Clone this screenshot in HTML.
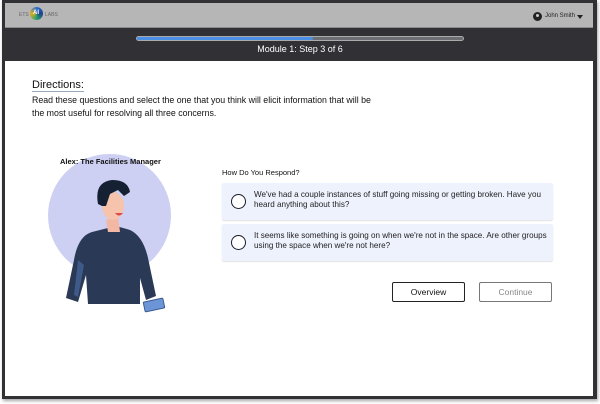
<!DOCTYPE html>
<html><head><style>
*{margin:0;padding:0;box-sizing:border-box}
body{width:600px;height:404px;background:#fff;position:relative;overflow:hidden;font-family:"Liberation Sans",sans-serif}
.frame{position:absolute;left:2px;top:0;width:595px;height:399px;background:#303035;box-shadow:1px 2px 3px rgba(0,0,0,.35)}
.top{position:absolute;left:5px;top:3px;width:588px;height:25px;background:#b6b6b6;border-bottom:1px solid #8a8a8a}
.content{position:absolute;left:5px;top:61px;width:588px;height:335px;background:#fff}
.abs{position:absolute}
.opt{position:absolute;left:222px;width:331px;background:#eef2fd;border-radius:2px;box-shadow:0 1px 1px rgba(0,0,0,.12);font-size:8.1px;line-height:10px;color:#222}
.radio{position:absolute;left:9px;width:15px;height:15px;border:1.5px solid #1a1a2a;border-radius:50%;background:#fff}
.btn{position:absolute;top:282px;width:73px;height:20px;border-radius:2px;font-size:8.5px;text-align:center;line-height:18px}
</style></head><body>
<div class="frame"></div>
<div class="top"></div>
<div class="abs" style="left:19px;top:12px;font-size:5px;color:#666">ETS</div>
<div class="abs" style="left:30px;top:7px;width:13px;height:13px;border-radius:50%;background:conic-gradient(#2a6fd1,#1b3f8f,#2aa06a,#e0b020,#2a6fd1)"></div>
<div class="abs" style="left:33px;top:10px;font-size:6px;color:#fff;font-weight:bold">AI</div>
<div class="abs" style="left:45px;top:12px;font-size:5px;color:#666">LABS</div>
<div class="abs" style="left:533px;top:12px;width:9px;height:9px;border-radius:50%;background:#222;border:1px solid #222"><div style="position:absolute;left:2px;top:1px;width:3px;height:3px;border-radius:50%;background:#ccc"></div></div>
<div class="abs" style="left:545px;top:13px;font-size:6px;color:#222">John Smith</div>
<div class="abs" style="left:577px;top:15px;width:0;height:0;border-left:3.5px solid transparent;border-right:3.5px solid transparent;border-top:4px solid #222"></div>
<div class="abs" style="left:136px;top:36px;width:328px;height:5px;border-radius:3px;background:#6b6e72;border:1px solid #aaa"></div>
<div class="abs" style="left:137px;top:37px;width:176px;height:3px;border-radius:2px;background:#4a8ee6"></div>
<div class="abs" style="left:0;top:44px;width:600px;text-align:center;color:#fff;font-size:9px">Module 1: Step 3 of 6</div>
<div class="content"></div>
<div class="abs" style="left:32px;top:79px;font-size:11px;color:#111;border-bottom:1px solid #9ab;line-height:12px">Directions:</div>
<div class="abs" style="left:32px;top:94px;font-size:8.8px;line-height:13px;color:#111">Read these questions and select the one that you think will elicit information that will be<br>the most useful for resolving all three concerns.</div>
<div class="abs" style="left:48px;top:154px;width:123px;height:123px;border-radius:50%;background:#cdd0f2"></div>
<svg class="abs" style="left:48px;top:170px" width="130" height="150" viewBox="0 0 130 150">
<path d="M44 62 Q30 66 26 90 L18 128 L30 132 L38 105 L40 134 L92 134 L92 108 L98 130 L108 126 L100 88 Q95 66 82 60 L68 56 Z" fill="#2a3a56"/>
<path d="M30 90 L26 125 L30 127 L36 95 Z" fill="#3e5a88"/>
<path d="M58 50 L60 62 L72 62 L70 46 Z" fill="#f2b8a3"/>
<ellipse cx="65" cy="36" rx="11" ry="14" fill="#f6c3ad"/>
<path d="M50 34 Q46 12 64 10 Q80 10 82 22 L76 26 L70 20 L62 24 L58 36 L54 36 Z" fill="#152033"/>
<path d="M67 43 Q71 48 75 43" fill="#e24848"/>
<rect x="96" y="130" width="20" height="10" rx="1" transform="rotate(-12 106 135)" fill="#6b95d6" stroke="#3b5a90"/>
</svg>
<div class="abs" style="left:60px;top:157px;font-size:7.5px;color:#111;font-weight:bold">Alex: The Facilities Manager</div>
<div class="abs" style="left:222px;top:168px;font-size:7.5px;color:#111">How Do You Respond?</div>
<div class="opt" style="top:183px;height:37px"><div class="radio" style="top:11px"></div><div style="position:absolute;left:32px;top:7px;width:292px">We've had a couple instances of stuff going missing or getting broken. Have you heard anything about this?</div></div>
<div class="opt" style="top:224px;height:37px"><div class="radio" style="top:11px"></div><div style="position:absolute;left:32px;top:7px;width:300px">It seems like something is going on when we're not in the space. Are other groups using the space when we're not here?</div></div>
<div class="btn" style="left:392px;border:1.5px solid #222;color:#111">Overview</div>
<div class="btn" style="left:479px;border:1px solid #777;color:#888">Continue</div>
</body></html>
